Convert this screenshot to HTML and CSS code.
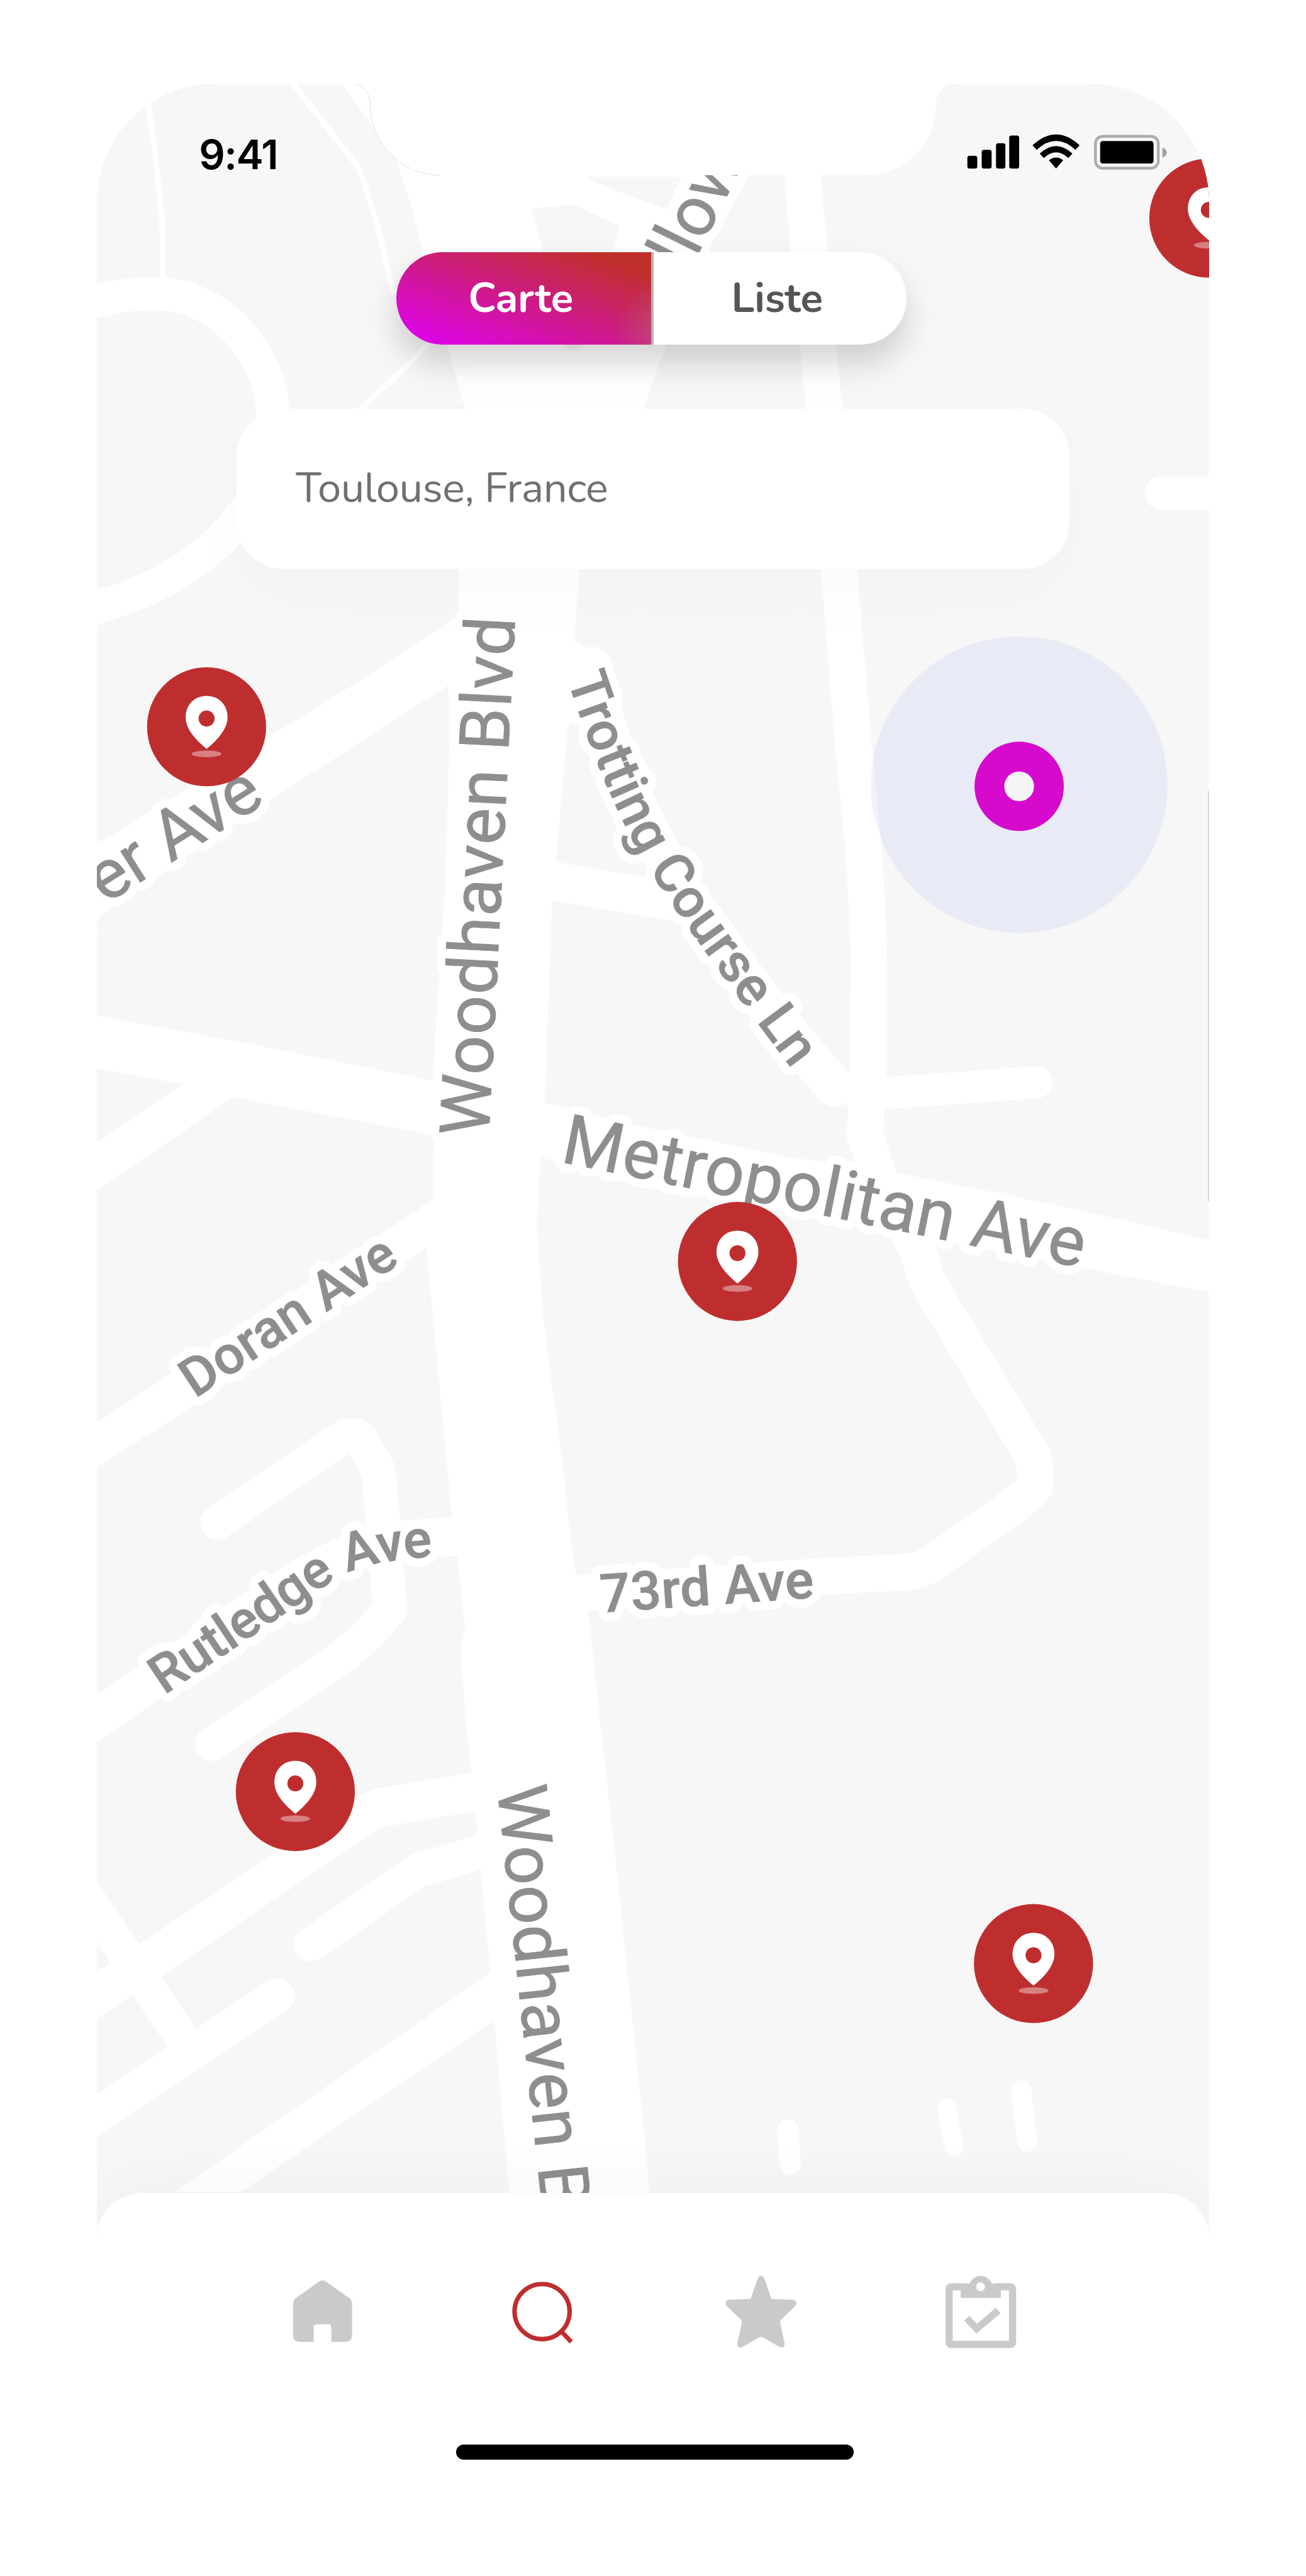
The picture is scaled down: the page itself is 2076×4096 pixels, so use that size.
FILE: index.html
```html
<!DOCTYPE html>
<html lang="fr">
<head>
<meta charset="utf-8">
<title>Carte</title>
<link rel="stylesheet" href="styles.css">
</head>
<body>
<main class="phone">
  <svg class="map" viewBox="176 152 2017 4367" preserveAspectRatio="none">
    <defs>
      <symbol id="pin" viewBox="-110 -110 220 220" overflow="visible">
        <circle r="108" fill="#bf2e2f"/>
        <path fill="#fff" d="M0-56C22-56 38-40 38-17C38 8 12 30 0 40C-12 30-38 8-38-17C-38-40-22-56 0-56Z"/>
        <circle cy="-15" r="14.5" fill="#bf2e2f"/>
        <ellipse cy="49" rx="27" ry="6" fill="#fff" opacity=".4"/>
      </symbol>
      <path id="p-trotting" d="M1029 1232C1082 1390 1122 1480 1167 1560C1212 1635 1302 1760 1446 1952L1481 1998"/>
      <path id="p-rutledge" d="M298 3076L431 2987L540 2912Q600 2868 634 2853Q690 2830 792 2824"/>
    </defs>
    <rect class="land" x="176" y="152" width="2017" height="4367"/>

    <g class="areas">
      <path d="M620 152L715 282L746 372L767 457L813 633L844 742L832 1033V1117L676 1221L487 1338L318 1445L170 1536V1670L501 1445L813 1244L816 1318L809 1586L785 1961L431 1890L170 1842V1938L332 1967L170 2077V2164L424 1991L788 2060L785 2177L170 2586V2667L360 2545L774 2264L820 2753L830 2827L844 2954L836 2987L843 3100L855 3214L873 3398L890 3579L318 3977L438 3977L897 3666L925 3990H1179L1174 3920L1139 3586L1118 3385L1086 3100L1069 2934L1041 2840L1020 2653L985 2385L974 2224L981 2100L1150 2150L1450 2200L1967 2301L2200 2346V2252L1950 2194L1606 2124L1431 2100L1150 2041L988 2001L1002 1633L1009 1562L1030 1318L1120 1250L1083 1187L1042 1164L1051 1033L1167 742L1206 633L1281 457L1358 321V152Z"/>
    </g>
    <path class="land" d="M964 378L1041 372L1124 409L1111 457L1058 630Q1042 644 1026 628L985 457ZM1062 321H1237L1209 380L1160 362L1076 330Z"/>

    <g class="roads">
      <path stroke-width="10" d="M262 140L280 263L294 397L296 510M532 152L652 306L687 415L713 530M640 755L746 657L790 610"/>
      <path stroke-width="60" d="M166 549C300 515 350 540 399 572C450 610 483 669 493 720C500 830 470 900 431 945C380 1010 320 1045 255 1075L166 1107"/>
      <path stroke-width="66" d="M1444 152L1456 318L1468 457L1495 742L1523 1043L1548 1350L1568 1552L1576 1720L1575 1940L1569 2060L1600 2150L1662 2262L1682 2325L1872 2640Q1884 2690 1874 2703L1845 2728L1695 2834Q1670 2852 1640 2853L1480 2861L1040 2892"/>
      <path stroke-width="60" d="M2107 895H2240"/>
      <path stroke-width="58" d="M1560 1987L1880 1964"/>
      <path stroke-width="72" d="M1075 1210C1110 1400 1180 1520 1260 1650C1340 1760 1430 1880 1515 1972"/>
      <path stroke-width="70" d="M1000 1598L1210 1634"/>
      <path stroke-width="62" d="M395 2763L616 2612Q640 2598 654 2610L687 2669L697 2787L708 2920Q650 2990 599 3021L385 3164"/>
      <path stroke-width="70" d="M150 3137L520 2880Q650 2800 720 2795L840 2787"/>
      <path stroke-width="70" d="M150 3638L276 3555L660 3295L690 3280L870 3250"/>
      <path stroke-width="61" d="M140 3415L330 3698"/>
      <path stroke-width="64" d="M140 3862L503 3622"/>
      <path stroke-width="62" d="M564 3528L757 3395L880 3357"/>
      <path stroke-width="38" d="M1429 3865L1434 3928"/>
      <path stroke-width="34" d="M1718 3825L1731 3895"/>
      <path stroke-width="36" d="M1853 3793L1863 3886"/>
    </g>

    <use class="halo" href="#labels"/>
    <g class="ink">
      <g id="labels">
        <g class="major">
          <text textLength="943" transform="translate(887 2063) rotate(-87.1)">Woodhaven Blvd</text>
          <text textLength="934" transform="translate(902 3243) rotate(83.9)">Woodhaven Blvd</text>
          <text text-anchor="end" transform="translate(484 1456) rotate(-32.3)">Cooper Ave</text>
          <text textLength="965" transform="translate(1015 2108) rotate(11.5)">Metropolitan Ave</text>
          <text transform="translate(1187 623) rotate(-63.7)">Willow</text>
        </g>
        <g class="minor">
          <text textLength="447" transform="translate(354 2538) rotate(-33.4)">Doran Ave</text>
          <text textLength="388" transform="translate(1091 2926) rotate(-4)">73rd Ave</text>
          <text class="trotting"><textPath href="#p-trotting">Trotting Course Ln</textPath></text>
          <text class="rutledge"><textPath href="#p-rutledge">Rutledge Ave</textPath></text>
        </g>
      </g>
    </g>

    <circle cx="1849" cy="1424" r="269" fill="rgb(86,127,237)" fill-opacity=".09"/>
    <circle cx="1849" cy="1427" r="81" fill="#d60acd"/>
    <circle cx="1849" cy="1427" r="27" fill="#f4f4f4"/>
    <use href="#pin" x="265" y="1209" width="220" height="220"/>
    <use href="#pin" x="1228" y="2179" width="220" height="220"/>
    <use href="#pin" x="426" y="3141" width="220" height="220"/>
    <use href="#pin" x="1765" y="3453" width="220" height="220"/>
    <use href="#pin" x="2083" y="286" width="220" height="220"/>

    <path fill="#fff" d="M630 150C658 150 672 168 672 192C672 262 730 318 799 318H1568C1640 318 1698 262 1698 192C1698 168 1712 152 1733 152V150Z"/>
    <path class="hairline" d="M643 152C661 156 672 170 672 192C672 262 730 318 799 318"/>
    <path class="hairline edge" d="M2192.5 1435V2180"/>
  </svg>

  <header class="status">
    <span class="time">9:41</span>
    <svg class="status-icons" viewBox="1750 240 370 70">
      <rect x="1753" y="282" width="18" height="23" rx="4"/>
      <rect x="1779" y="271" width="18" height="34" rx="4"/>
      <rect x="1805" y="259" width="17" height="46" rx="4"/>
      <rect x="1829" y="245" width="18" height="60" rx="4"/>
      <g fill="none" stroke="#000" stroke-width="11">
        <path d="M1875 267Q1914 231 1953 267"/>
        <path d="M1888 282Q1914 258 1940 282"/>
      </g>
      <path d="M1901 290Q1914 280 1927 290L1914 305Z"/>
      <rect x="1985.500" y="246.500" width="114" height="58" rx="13" fill="none" stroke="#000" stroke-opacity=".3" stroke-width="5"/>
      <rect x="1994" y="255" width="97" height="41" rx="5"/>
      <path d="M2107 267Q2115 270 2115 276T2107 285Z" opacity=".35"/>
    </svg>
  </header>

  <div class="toggle">
    <span class="tab active">Carte</span>
    <span class="tab">Liste</span>
  </div>

  <div class="search">Toulouse, France</div>

  <nav class="nav">
    <div class="nav-items">
      <svg class="icon" viewBox="0 0 134 134"><path d="M60 14Q67 9 74 14L115 43Q120.500 47 120.500 53V112Q120 123 109 123H83V97Q83 91 77 91H57Q51 91 51 97V123H25Q14 123 13.500 112V53Q13.500 47 19 43Z"/></svg>
      <svg class="icon current" viewBox="0 0 134 134"><circle cx="67" cy="68" r="50"/><path d="M101 103L120 123"/></svg>
      <svg class="icon" viewBox="0 0 134 134"><path d="M67 3Q71 3 73 8L86 45L126 46.500Q134 49 130 57L103 83Q101 86 102 89L110 126Q110 134 102 133L72 115.500Q67 113 62 115.500L32 133Q24 134 24 126L32 89Q33 86 31 83L4 57Q0 49 8 46.500L48 45L61 8Q63 3 67 3Z"/></svg>
      <svg class="icon" viewBox="0 0 134 134"><path d="M40 23H14Q10 23 10 27V124Q10 127.500 14 127.500H121Q125 127.500 125 124V27Q125 23 121 23H95" fill="none" stroke="#cacaca" stroke-width="13"/><path fill-rule="evenodd" d="M31 43V17H47Q54 3 67 3T88 17H104V43ZM67 15A8 8 0 1 0 67 31A8 8 0 1 0 67 15Z"/><path d="M42 80L60 99L99 66" fill="none" stroke="#cacaca" stroke-width="13"/></svg>
    </div>
    <div class="home-bar"></div>
  </nav>
</main>
</body>
</html>
```
FILE: styles.css
```css
body {
  margin: 0;
  background: #fff;
}

.phone {
  position: relative;
  display: flex;
  flex-direction: column;
  width: 1767.5px;
  height: 3827px;
  margin: 133.3px 0 0 154.2px;
  border-radius: 188px 188px 0 0;
  overflow: hidden;
}

.map {
  position: absolute;
  inset: 0;
  width: 100%;
  height: 100%;
}

.land { fill: #f7f7f7; }
.areas { fill: #fff; }

.roads {
  fill: none;
  stroke: #fff;
  stroke-linecap: round;
  stroke-linejoin: round;
}

/* Road names: a white outline copy lies under the grey letters. */
#labels { font-family: Roboto, "Liberation Sans", sans-serif; }
.major { font-size: 126px; }
.minor { font-size: 97px; font-weight: 500; }
.trotting { font-size: 98.5px; letter-spacing: .3px; }
.rutledge { font-size: 96px; letter-spacing: -.6px; }

.ink {
  fill: #8e8e8e;
  stroke: #8e8e8e;
  stroke-width: 1px;
}

.halo {
  fill: #fff;
  stroke: #fff;
  stroke-width: 32px;
  stroke-linejoin: round;
}

.hairline {
  fill: none;
  stroke: #ddd;
  stroke-width: 1;
}

.hairline.edge { stroke: #aaa; }

.status {
  position: relative;
  display: flex;
  align-items: center;
  justify-content: space-between;
  height: 216px;
  margin-bottom: 52px;
  padding: 0 63px 0 162px;
}

.time {
  font: 600 65px/80px Inter, "Liberation Sans", sans-serif;
  letter-spacing: -1.5px;
  padding-top: 9px;
}

.status-icons {
  width: 324.200px;
  height: 61.300px;
}

.toggle {
  position: relative;
  display: flex;
  flex: none;
  width: 811px;
  height: 147px;
  margin-left: 475.500px;
  border-radius: 74px;
  background: #fff;
  box-shadow: 0 30px 50px rgba(0, 0, 0, .17);
}

.tab {
  flex: 1;
  box-sizing: border-box;
  padding-right: 9px;
  font: 700 65.500px/147px Nunito, Lato, sans-serif;
  text-align: center;
  color: #555;
}

.tab.active {
  flex: 0 0 409px;
  color: #fff;
  border-right: 4px solid #b4b4b4;
  border-radius: 74px 0 0 74px;
  background:
    radial-gradient(circle at 105% 85%, rgba(180, 100, 120, .6), rgba(180, 100, 120, 0) 80px),
    linear-gradient(to top right, #dc05e2 10%, #c0302b 88%);
  background-clip: padding-box;
}

.search {
  position: relative;
  flex: none;
  width: 1324px;
  height: 255px;
  margin: 102px 0 0 222px;
  padding-left: 94px;
  box-sizing: border-box;
  border-radius: 76px;
  background: #fff;
  box-shadow: 0 46px 130px rgba(0, 0, 0, .02);
  font: 400 67px/252px Nunito, Lato, sans-serif;
  letter-spacing: -.5px;
  color: #707070;
}

.nav {
  position: relative;
  display: flex;
  flex-direction: column;
  align-items: center;
  justify-content: space-between;
  height: 473px;
  margin-top: auto;
  padding: 129px 0 49px;
  box-sizing: border-box;
  border-radius: 72px 72px 0 0;
  background: #fff;
  box-shadow: 0 -20px 100px rgba(0, 0, 0, .03);
}

.nav-items {
  display: grid;
  grid-template-columns: repeat(4, 348.500px);
  justify-items: center;
  margin-right: 4px;
}

.icon {
  width: 117.400px;
  height: 117.400px;
  fill: #cacaca;
}

.icon.current {
  fill: none;
  stroke: #bf2e2f;
  stroke-width: 8;
}

.home-bar {
  width: 632px;
  height: 24px;
  margin-left: 6px;
  border-radius: 12px;
  background: #000;
}
```
